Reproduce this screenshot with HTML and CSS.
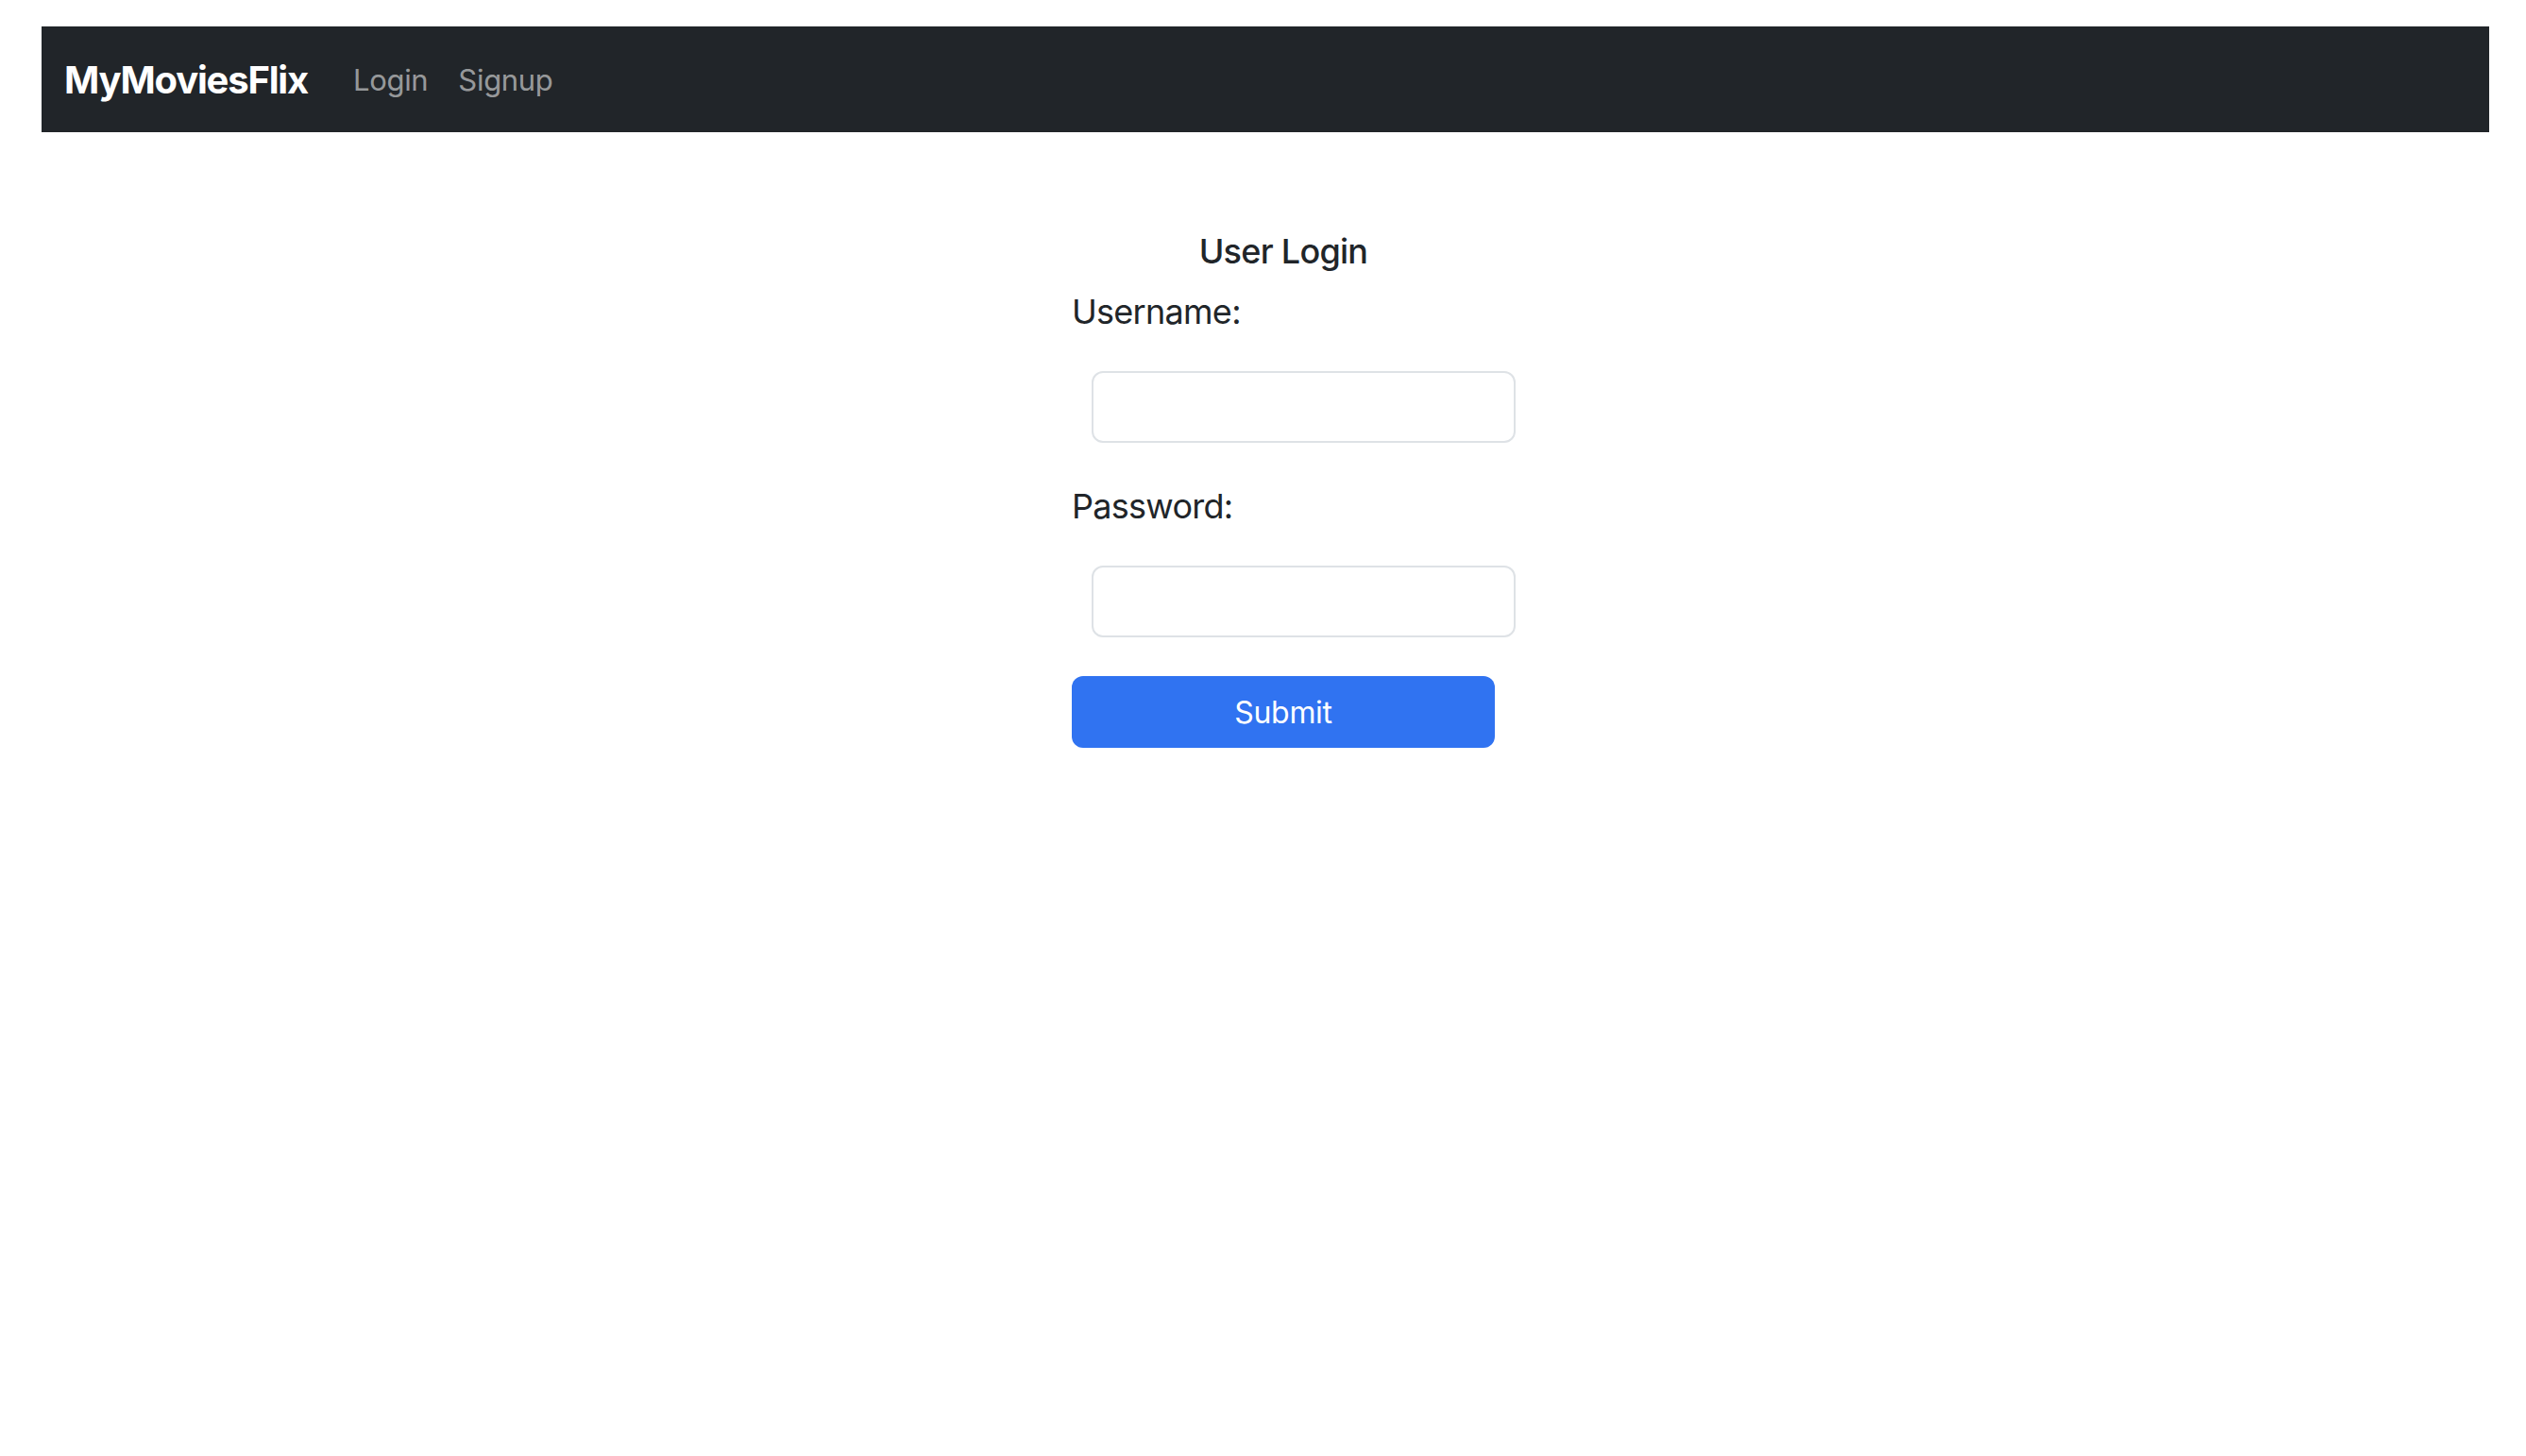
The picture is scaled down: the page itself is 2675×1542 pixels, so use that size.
FILE: index.html
```html
<!DOCTYPE html>
<html>
<head>
  <title>MyMoviesFlix - Login</title>
  <link rel="stylesheet" href="styles.css">
</head>
<body>

<nav class="navbar">
  <a class="brand" href="#">MyMoviesFlix</a>
  <a class="nav-link" href="#">Login</a>
  <a class="nav-link" href="#">Signup</a>
</nav>

<div class="page">
  <form class="login">
    <h2 class="title">User Login</h2>

    <label for="username">Username:</label>
    <input type="text" id="username" name="username">

    <label for="password">Password:</label>
    <input type="password" id="password" name="password">

    <button type="submit">Submit</button>
  </form>
</div>

</body>
</html>
```
FILE: styles.css
```css
* {
  box-sizing: border-box;
  font-family: Inter, "Liberation Sans", sans-serif;
}

body {
  background: #fff;
  color: #212529;
  margin: 28px 39px 0 44px;
}

.navbar {
  background: #212529;
  height: 112px;
  padding: 0 24px;
  display: flex;
  align-items: center;
}

.brand {
  color: #fff;
  font-size: 40px;
  font-weight: 700;
  letter-spacing: -0.03em;
  text-decoration: none;
  margin-right: 32px;
}

.nav-link {
  color: rgba(255, 255, 255, 0.55);
  font-size: 31px;
  letter-spacing: -0.01em;
  text-decoration: none;
  padding: 0 16px;
}

.nav-link:first-of-type {
  padding-left: 0;
}

.page {
  display: flex;
  justify-content: center;
  padding-left: 60px;
}

.login {
  width: 470px;
  margin-top: 104px;
  display: flex;
  flex-direction: column;
}

.title {
  width: 448px;
  margin: 0 0 20px;
  text-align: center;
  font-size: 36px;
  line-height: 44px;
  font-weight: 500;
  letter-spacing: -0.02em;
}

label {
  font-size: 36px;
  line-height: 44px;
  letter-spacing: -0.02em;
}

input {
  width: 449px;
  height: 76px;
  margin: 41px 0 45px 21px;
  border: 2px solid #dee2e6;
  border-radius: 12px;
  font-size: 32px;
  padding: 0 24px;
}

input:last-of-type {
  margin-bottom: 41px;
}

button {
  width: 448px;
  height: 76px;
  border: none;
  border-radius: 12px;
  background: #3073f1;
  color: #fff;
  font-size: 32px;
  letter-spacing: -0.01em;
  cursor: pointer;
}
```
